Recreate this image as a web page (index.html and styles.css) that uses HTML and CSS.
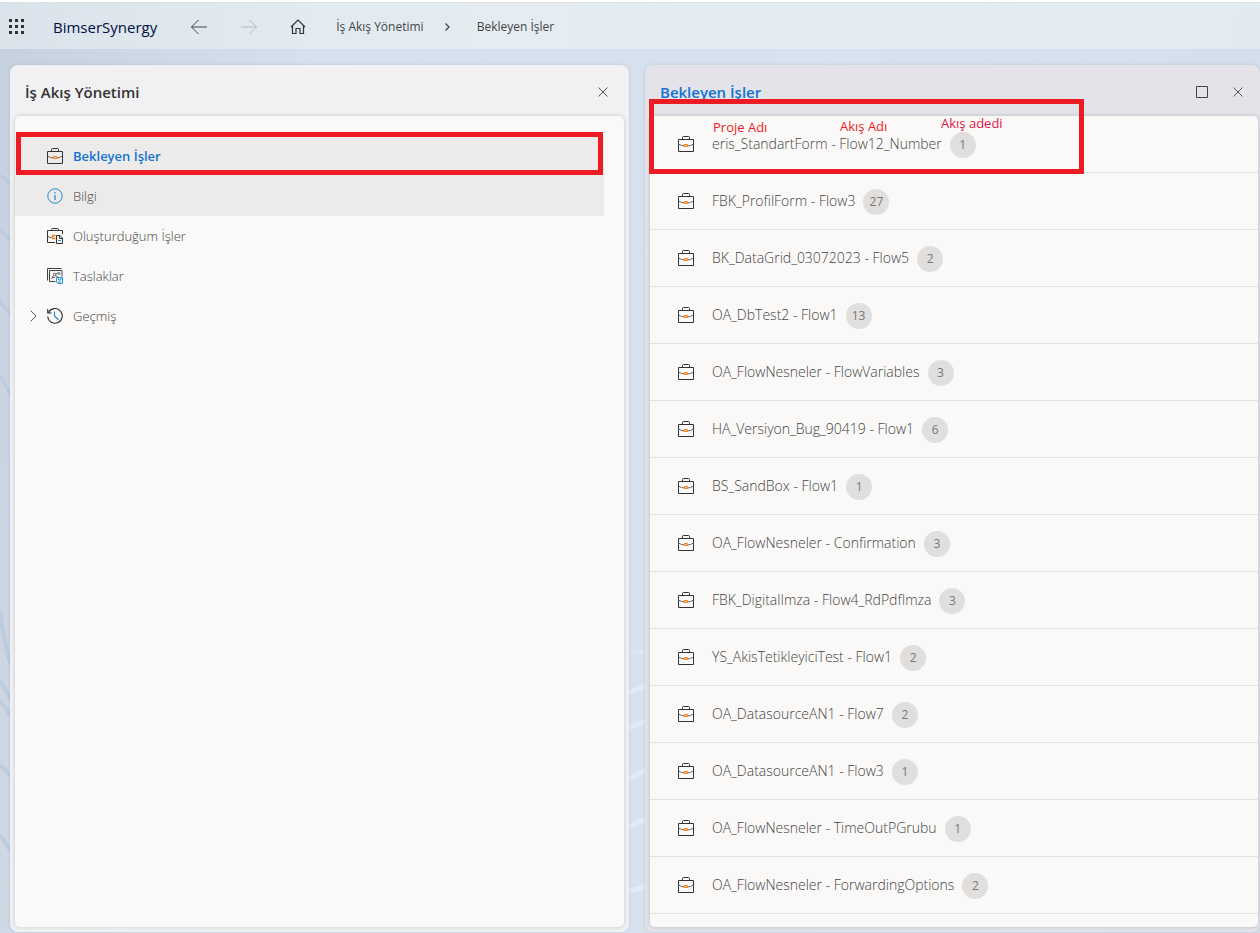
FILE: index.html
```html
<!DOCTYPE html>
<html lang="tr">
<head>
<meta charset="utf-8">
<title>BimserSynergy</title>
<link rel="stylesheet" href="styles.css">
</head>
<body>
<svg class="backdrop" viewBox="0 0 1260 933" preserveAspectRatio="none" aria-hidden="true">
  <g fill="none" stroke="#b9c8d6" stroke-width="3" opacity=".7">
    <path d="M0 175l12 10M0 230l12 12M0 302l12 14M0 375l12 22"/>
    <path d="M0 610q5 40 12 58M0 680l12 22M0 700l12 18M0 765l12 12M0 835l12 18" stroke-width="4"/>
  </g>
  <g fill="none" stroke="#e0ebf7" stroke-width="5">
    <path d="M626 653l22-2" opacity=".5"/>
    <path d="M626 693l22-7M626 729l22-9M626 780l22-11M626 828l22-10M626 892l22-6"/>
  </g>
</svg>
<svg class="symbols" aria-hidden="true">
  <symbol id="case" viewBox="0 0 16 16">
    <path d="M.5 3.500h15v12H.5zM4.500 3.500V1.500q0-1 1-1h5q1 0 1 1v2" fill="none" stroke="#333"/>
    <path d="M.5 8q3 2 6 2M15.500 8q-3 2-6 2" fill="none" stroke="#666"/>
    <path d="M6.500 8.500h3v2h-3z" fill="#fbd3a8" stroke="#f0811f"/>
  </symbol>
</svg>
<header class="topbar">
  <button class="icon-btn apps" aria-label="Uygulamalar"><svg width="16" height="16" viewBox="0 0 16 16" fill="#333"><path d="M0 0h3v3H0zM6 0h3v3H6zM12 0h3v3h-3zM0 6h3v3H0zM6 6h3v3H6zM12 6h3v3h-3zM0 12h3v3H0zM6 12h3v3H6zM12 12h3v3h-3z"/></svg></button>
  <span class="brand">BimserSynergy</span>
  <nav class="history">
    <button class="icon-btn" aria-label="Geri"><svg width="18" height="16" viewBox="0 0 18 16" fill="none" stroke="#444"><path d="M8.500 1L1.500 8l7 7M1.500 8H17"/></svg></button>
    <button class="icon-btn" aria-label="İleri" disabled><svg width="18" height="16" viewBox="0 0 18 16" fill="none" stroke="#b5bcc3"><path d="M9.500 1l7 7-7 7M16.500 8H1"/></svg></button>
    <button class="icon-btn" aria-label="Ana sayfa"><svg width="16" height="16" viewBox="0 0 16 16" fill="none" stroke="#333" stroke-width="1.200"><path d="M1 8l7-7 7 7M2.500 6.500v8h3.500v-5h4v5h3.500v-8"/></svg></button>
  </nav>
  <nav class="crumbs">
    <a href="#">İş Akış Yönetimi</a>
    <svg width="5" height="8" viewBox="0 0 5 8" fill="none" stroke="#444" stroke-width="1.300"><path d="M.5.5L4 4 .5 7.500"/></svg>
    <a class="current" href="#">Bekleyen İşler</a>
  </nav>
</header>
<main class="workspace">
  <section class="panel">
    <div class="panel-head">
      <h2>İş Akış Yönetimi</h2>
      <button class="icon-btn" aria-label="Kapat"><svg width="10" height="10" viewBox="0 0 10 10" stroke="#555"><path d="M.5.5l9 9M9.500.5l-9 9"/></svg></button>
    </div>
    <nav class="panel-body tree">
      <a class="node selected" href="#"><span class="twisty"></span><svg class="ico"><use href="#case"/></svg>Bekleyen İşler<span class="mark mark-node"></span></a>
      <a class="node hover" href="#"><span class="twisty"></span><svg class="ico" viewBox="0 0 16 16"><circle cx="8" cy="8" r="7.200" fill="none" stroke="#1e8ad6"/><path d="M8 7v5M8 4v1.500" stroke="#1e8ad6" stroke-width="1.300"/></svg>Bilgi</a>
      <a class="node" href="#"><span class="twisty"></span><svg class="ico" viewBox="0 0 16 16" fill="none"><path d="M15.500 6V2.500H.5v12H8M4.500 2.500v-1q0-1 1-1h5q1 0 1 1v1" stroke="#333"/><path d="M.5 8q2 2 4 1.500" stroke="#555"/><path d="M8.500 7.500h-3v3h3" stroke="#f0811f" stroke-width="1.500"/><path d="M9.500 7.500h3.500l2.500 2.500v5.500h-6zM12.500 7.500v3h3" stroke="#333"/><path d="M11 12.500h3" stroke="#1e8ad6"/></svg>Oluşturduğum İşler</a>
      <a class="node" href="#"><span class="twisty"></span><svg class="ico" viewBox="0 0 16 16" fill="none"><path d="M.5 12.500V.5h14M8.500 13.500h-6v-11h12.500v6" stroke="#444"/><path d="M4.500 11l2-3.500M8 6l3-1M8 7.500l3 1M5 9.500h3" stroke="#666"/><circle cx="7.500" cy="6.500" r="1.300" stroke="#666"/><circle cx="12" cy="5.500" r="1" stroke="#666"/><path d="M9.500 9.500h6v6h-4.500l-1.500-1.500zM11.500 9.500v2.500h2.500v-2.500M11.500 15.500v-1.500h2.500" stroke="#2b95dc"/></svg>Taslaklar</a>
      <a class="node" href="#"><span class="twisty"><svg width="7" height="12" viewBox="0 0 7 12" fill="none" stroke="#555"><path d="M.5.5L6 6 .5 11.500"/></svg></span><svg class="ico" viewBox="0 0 16 16" fill="none"><path d="M1.500 4.500A7.300 7.300 0 1 1 .7 8.500M.7 1v4h4" stroke="#333" stroke-width="1.100"/><path d="M7.500 3.500V8l4 4" stroke="#1e8ad6" stroke-width="1.200"/></svg>Geçmiş</a>
    </nav>
  </section>
  <section class="panel active">
    <div class="panel-head">
      <h2>Bekleyen İşler</h2>
      <button class="icon-btn" aria-label="Büyüt"><svg width="12" height="12" viewBox="0 0 12 12" fill="none" stroke="#444"><path d="M.5.5h11v11H.5z"/></svg></button>
      <button class="icon-btn" aria-label="Kapat"><svg width="10" height="10" viewBox="0 0 10 10" stroke="#555"><path d="M.5.5l9 9M9.500.5l-9 9"/></svg></button>
    </div>
    <ul class="panel-body flows">
      <li><svg class="ico"><use href="#case"/></svg><a href="#">eris_StandartForm - Flow12_Number</a><span class="badge">1</span></li>
      <li><svg class="ico"><use href="#case"/></svg><a href="#">FBK_ProfilForm - Flow3</a><span class="badge">27</span></li>
      <li><svg class="ico"><use href="#case"/></svg><a href="#">BK_DataGrid_03072023 - Flow5</a><span class="badge">2</span></li>
      <li><svg class="ico"><use href="#case"/></svg><a href="#">OA_DbTest2 - Flow1</a><span class="badge">13</span></li>
      <li><svg class="ico"><use href="#case"/></svg><a href="#">OA_FlowNesneler - FlowVariables</a><span class="badge">3</span></li>
      <li><svg class="ico"><use href="#case"/></svg><a href="#">HA_Versiyon_Bug_90419 - Flow1</a><span class="badge">6</span></li>
      <li><svg class="ico"><use href="#case"/></svg><a href="#">BS_SandBox - Flow1</a><span class="badge">1</span></li>
      <li><svg class="ico"><use href="#case"/></svg><a href="#">OA_FlowNesneler - Confirmation</a><span class="badge">3</span></li>
      <li><svg class="ico"><use href="#case"/></svg><a href="#">FBK_DigitalImza - Flow4_RdPdfImza</a><span class="badge">3</span></li>
      <li><svg class="ico"><use href="#case"/></svg><a href="#">YS_AkisTetikleyiciTest - Flow1</a><span class="badge">2</span></li>
      <li><svg class="ico"><use href="#case"/></svg><a href="#">OA_DatasourceAN1 - Flow7</a><span class="badge">2</span></li>
      <li><svg class="ico"><use href="#case"/></svg><a href="#">OA_DatasourceAN1 - Flow3</a><span class="badge">1</span></li>
      <li><svg class="ico"><use href="#case"/></svg><a href="#">OA_FlowNesneler - TimeOutPGrubu</a><span class="badge">1</span></li>
      <li><svg class="ico"><use href="#case"/></svg><a href="#">OA_FlowNesneler - ForwardingOptions</a><span class="badge">2</span></li>
    </ul>
    <div class="mark mark-flow">
      <span class="note note-project">Proje Adı</span>
      <span class="note note-flow">Akış Adı</span>
      <span class="note note-count">Akış adedi</span>
    </div>
  </section>
</main>
</body>
</html>
```

FILE: styles.css
```css
* { box-sizing: border-box; }
body {
  margin: 0;
  min-height: 100vh;
  display: flex;
  flex-direction: column;
  position: relative;
  overflow: hidden;
  background: linear-gradient(100deg, #c5d1de 0, #d5e0ec 22%, #d7e2ee 60%, #d3deeb 100%);
  font: 300 13px/20px "Open Sans", "Noto Sans", sans-serif;
  color: #444;
}
a { color: inherit; text-decoration: none; }
.backdrop { position: absolute; inset: 0; width: 100%; height: 100%; z-index: -1; }
.symbols { display: none; }
.ico { width: 16px; height: 16px; flex: none; }
.icon-btn { display: flex; padding: 0; border: 0; background: none; }

.topbar {
  display: flex;
  align-items: center;
  height: 49px;
  padding: 2px 9px 0;
  border-top: 2px solid #fff;
  background: rgba(240, 245, 248, .5);
  box-shadow: inset 0 1px #dde2dc;
}
.brand { margin-left: 28px; font-size: 15px; font-weight: 500; color: #001040; }
.history { display: flex; align-items: center; gap: 32px; margin-left: 33px; }
.crumbs { display: flex; align-items: center; align-self: stretch; margin-left: 30px; font-size: 12px; font-weight: 500; color: #444; }
.crumbs svg { margin: 0 15px 0 21px; }
.current {
  display: flex;
  align-items: center;
  align-self: stretch;
  padding: 0 16px 0 12px;
  background: rgba(255, 255, 255, .1);
}

.workspace {
  flex: 1;
  display: grid;
  grid-template-columns: 619fr 615fr;
  gap: 16px;
  padding: 16px 0 1px 10px;
}
.panel {
  position: relative;
  display: flex;
  flex-direction: column;
  padding: 0 5px 5px;
  border-radius: 8px;
  background: #f1f1f4;
  box-shadow: 0 0 3px rgba(60, 80, 110, .2);
}
.panel.active { background: #e4e3ea; padding-right: 2px; }
.panel-head { display: flex; align-items: center; gap: 25px; height: 51px; padding: 3px 16px 0 10px; }
.active .panel-head { padding-right: 15px; }
.panel-head h2 { flex: 1; margin: 0; font-size: 15px; font-weight: 600; color: #333; }
.active h2 { color: #1373d1; }
.panel-body {
  flex: 1;
  margin: 0;
  border-radius: 5px;
  background: #faf9f8;
  box-shadow: 0 0 4px rgba(0, 0, 0, .18);
}

.tree { padding: 20px 20px 0 0; }
.node { position: relative; display: flex; align-items: center; gap: 10px; height: 40px; padding-left: 15px; }
.twisty { display: flex; width: 7px; }
.selected, .hover { background: #edebea; }
.selected { font-weight: 600; color: #1373d1; }

.flows { padding: 0; list-style: none; font-size: 14px; }
.flows li { display: flex; align-items: center; height: 57px; padding-left: 28px; border-bottom: 1px solid #e3e3e3; }
.flows a { margin-left: 18px; }
.badge {
  width: 26px;
  margin: 2px 0 0 8px;
  border-radius: 13px;
  background: #e1dfde;
  font-size: 12px;
  font-weight: 400;
  line-height: 26px;
  text-align: center;
  color: #777;
}

.mark { position: absolute; border: 5px solid #ed1c24; pointer-events: none; }
.mark-node { inset: -4px 1px 1px; }
.mark-flow { top: 34px; left: 4px; width: 435px; height: 75px; }
.note { position: absolute; font-size: 13px; font-weight: 400; line-height: 16px; color: #ed1c24; white-space: nowrap; }
.note-project { left: 59px; top: 15px; }
.note-flow { left: 186px; top: 14px; }
.note-count { left: 287px; top: 11px; color: #dc1446; }
```
